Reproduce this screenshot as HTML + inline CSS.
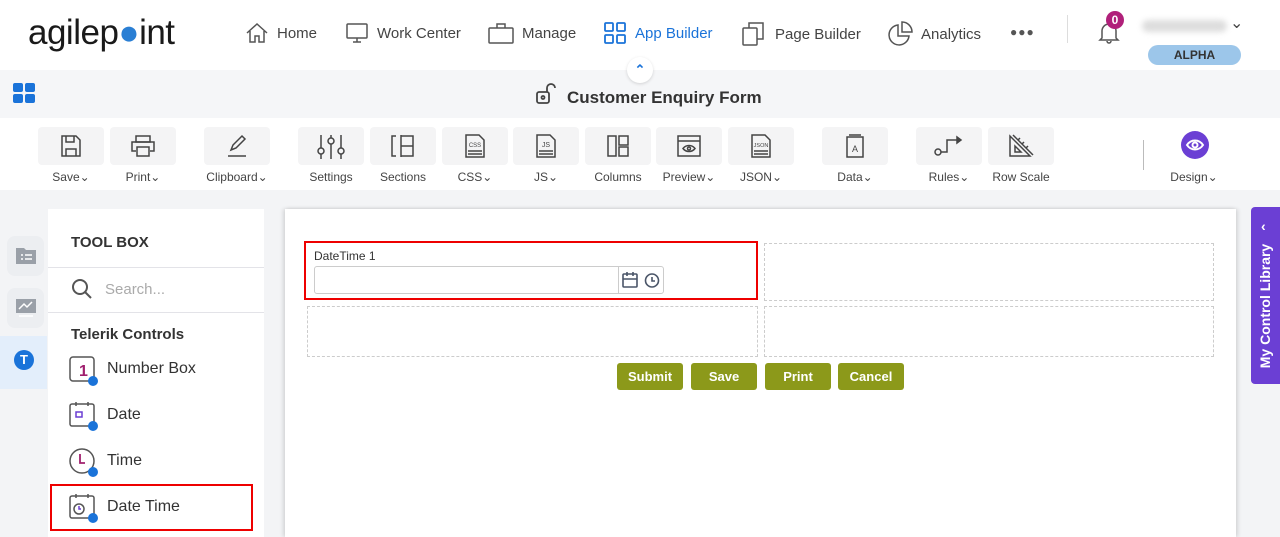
<!DOCTYPE html>
<html><head><meta charset="utf-8"><style>
*{box-sizing:border-box;margin:0;padding:0}
body{width:1280px;height:537px;overflow:hidden;font-family:"Liberation Sans",sans-serif;background:#f3f4f6;position:relative;color:#333}
.a{position:absolute}
.nav{font-size:15px;color:#444;top:21px;display:flex;align-items:center;gap:8px}
.tb{position:absolute;top:127px;width:66px;height:38px;background:#f4f4f5;border-radius:4px;display:flex;align-items:center;justify-content:center}
.tl{position:absolute;top:170px;font-size:12px;color:#444;text-align:center;width:80px}
.dash{position:absolute;border:1px dashed #ccc}
.btn{position:absolute;top:363px;height:27px;background:#8c991a;color:#fff;font-size:13px;font-weight:bold;border-radius:3px;display:flex;align-items:center;justify-content:center}
.ti{position:absolute;left:107px;font-size:16px;color:#333}
</style></head><body>
<!-- header -->
<div class="a" style="left:0;top:0;width:1280px;height:70px;background:#fff"></div>
<div class="a" style="left:28px;top:13px;font-size:35px;color:#1a1a1a;letter-spacing:-0.5px;font-family:'Liberation Sans',sans-serif">agilep<span style="color:#2a7fd4">●</span>int</div>
<div class="a nav" style="left:245px"><svg width="24" height="24" viewBox="0 0 24 24" fill="none" stroke="#555" stroke-width="1.5"><path d="M2 12L12 3l10 9M5 10v11h5v-6h4v6h5V10"/></svg>Home</div>
<div class="a nav" style="left:345px"><svg width="24" height="24" viewBox="0 0 24 24" fill="none" stroke="#555" stroke-width="1.5"><rect x="2" y="3" width="20" height="14" rx="1"/><path d="M12 17v4M8 21h8"/></svg>Work Center</div>
<div class="a nav" style="left:488px"><svg width="26" height="24" viewBox="0 0 26 24" fill="none" stroke="#555" stroke-width="1.5"><rect x="1" y="7" width="24" height="15" rx="1"/><path d="M9 7V3h8v4"/></svg>Manage</div>
<div class="a nav" style="left:603px;color:#1a73d9"><svg width="24" height="24" viewBox="0 0 24 24" fill="none" stroke="#1a73d9" stroke-width="1.8"><rect x="2" y="2" width="8" height="8" rx="1"/><rect x="14" y="2" width="8" height="8" rx="1"/><rect x="2" y="14" width="8" height="8" rx="1"/><rect x="14" y="14" width="8" height="8" rx="1"/></svg>App Builder</div>
<div class="a nav" style="left:741px"><svg width="26" height="26" viewBox="0 0 26 26" fill="none" stroke="#555" stroke-width="1.5"><rect x="2" y="7" width="14" height="17" rx="1"/><path d="M8 7V2h14v16h-6"/></svg>Page Builder</div>
<div class="a nav" style="left:887px"><svg width="26" height="26" viewBox="0 0 26 26" fill="none" stroke="#555" stroke-width="1.5"><path d="M11 4a10 10 0 1 0 11 11H11z"/><path d="M15 1v10h10A10 10 0 0 0 15 1z"/></svg>Analytics</div>
<div class="a" style="left:1010px;top:25px;font-size:12px;color:#555;letter-spacing:1px">●●●</div>
<div class="a" style="left:1067px;top:15px;width:1px;height:28px;background:#ddd"></div>
<svg class="a" style="left:1097px;top:20px" width="24" height="24" viewBox="0 0 24 24" fill="none" stroke="#555" stroke-width="1.5"><path d="M5 18V11a7 7 0 0 1 14 0v7l2 2H3zM10 21a2 2 0 0 0 4 0"/></svg>
<div class="a" style="left:1106px;top:11px;width:18px;height:18px;border-radius:50%;background:#b0207a;color:#fff;font-size:12px;font-weight:bold;text-align:center;line-height:18px">0</div>
<div class="a" style="left:1142px;top:20px;width:85px;height:12px;background:#ddd;border-radius:6px;filter:blur(3px)"></div>
<div class="a" style="left:1230px;top:13px;font-size:16px;color:#444">&#8964;</div>
<div class="a" style="left:1148px;top:45px;width:93px;height:20px;background:#9cc6ea;border-radius:10px;font-size:12px;font-weight:bold;color:#333;text-align:center;line-height:20px">ALPHA</div>
<!-- subheader -->
<div class="a" style="left:0;top:70px;width:1280px;height:48px;background:#f5f6f8"></div>
<div class="a" style="left:627px;top:57px;width:26px;height:26px;border-radius:50%;background:#fff;box-shadow:0 1px 3px rgba(0,0,0,.15);text-align:center;color:#1a73d9;font-size:13px;line-height:26px;font-weight:bold">&#8963;</div>
<svg class="a" style="left:13px;top:83px" width="24" height="22" viewBox="0 0 24 22"><g fill="#1a73d9"><rect x="0" y="0" width="10" height="9" rx="2"/><rect x="12" y="0" width="10" height="9" rx="2"/><rect x="0" y="11" width="10" height="9" rx="2"/><rect x="12" y="11" width="10" height="9" rx="2"/></g></svg>
<svg class="a" style="left:535px;top:83px" width="26" height="22" viewBox="0 0 26 22" fill="none" stroke="#444" stroke-width="1.8"><rect x="2" y="9" width="12" height="11" rx="2"/><circle cx="8" cy="14.5" r="1.5"/><path d="M12 9V5a4 4 0 0 1 8 0"/></svg>
<div class="a" style="left:567px;top:88px;font-size:17px;font-weight:bold;color:#333">Customer Enquiry Form</div>
<!-- toolbar -->
<div class="a" style="left:0;top:118px;width:1280px;height:72px;background:#fff"></div>
<div class="tb" style="left:38px"><svg width="22" height="24" viewBox="0 0 22 24" fill="none" stroke="#444" stroke-width="1.5"><path d="M2 2h14l4 4v16H2z"/><path d="M6 2v6h8V2M6 22v-7h10v7"/></svg></div><div class="tl" style="left:31px">Save&#8964;</div>
<div class="tb" style="left:110px"><svg width="28" height="24" viewBox="0 0 28 24" fill="none" stroke="#444" stroke-width="1.5"><rect x="7" y="2" width="14" height="6"/><path d="M7 17H3V8h22v9h-4"/><rect x="8" y="13" width="12" height="9"/></svg></div><div class="tl" style="left:103px">Print&#8964;</div>
<div class="tb" style="left:204px"><svg width="24" height="24" viewBox="0 0 24 24" fill="none" stroke="#444" stroke-width="1.5"><path d="M6 16l2-5 9-9 3 3-9 9zM3 22h18"/></svg></div><div class="tl" style="left:197px">Clipboard&#8964;</div>
<div class="tb" style="left:298px"><svg width="30" height="26" viewBox="0 0 30 26" fill="none" stroke="#444" stroke-width="1.5"><path d="M5 2v24M15 2v24M25 2v24"/><circle cx="5" cy="18" r="3" fill="#f4f4f5"/><circle cx="15" cy="8" r="3" fill="#f4f4f5"/><circle cx="25" cy="18" r="3" fill="#f4f4f5"/></svg></div><div class="tl" style="left:291px">Settings</div>
<div class="tb" style="left:370px"><svg width="28" height="24" viewBox="0 0 28 24" fill="none" stroke="#444" stroke-width="1.5"><path d="M7 2H3v20h4M12 1v22M12 2h12v20H12M12 12h12"/></svg></div><div class="tl" style="left:363px">Sections</div>
<div class="tb" style="left:442px"><svg width="22" height="26" viewBox="0 0 22 26" fill="none" stroke="#444" stroke-width="1.5"><path d="M2 2h13l5 5v17H2zM4 18h14M4 21h14"/><text x="11" y="14" font-size="6" text-anchor="middle" fill="#444" stroke="none" font-family="Liberation Sans">CSS</text></svg></div><div class="tl" style="left:435px">CSS&#8964;</div>
<div class="tb" style="left:513px"><svg width="22" height="26" viewBox="0 0 22 26" fill="none" stroke="#444" stroke-width="1.5"><path d="M2 2h13l5 5v17H2zM4 18h14M4 21h14"/><text x="11" y="14" font-size="7" text-anchor="middle" fill="#444" stroke="none" font-family="Liberation Sans">JS</text></svg></div><div class="tl" style="left:506px">JS&#8964;</div>
<div class="tb" style="left:585px"><svg width="24" height="24" viewBox="0 0 24 24" fill="none" stroke="#444" stroke-width="1.5"><rect x="2" y="2" width="8" height="20"/><rect x="13" y="2" width="9" height="9"/><rect x="13" y="13" width="9" height="9"/></svg></div><div class="tl" style="left:578px">Columns</div>
<div class="tb" style="left:656px"><svg width="26" height="24" viewBox="0 0 26 24" fill="none" stroke="#444" stroke-width="1.5"><rect x="2" y="2" width="22" height="20"/><path d="M2 7h22M7 14.5c3-4 9-4 12 0c-3 4-9 4-12 0z"/><circle cx="13" cy="14.5" r="1.5"/></svg></div><div class="tl" style="left:649px">Preview&#8964;</div>
<div class="tb" style="left:728px"><svg width="22" height="26" viewBox="0 0 22 26" fill="none" stroke="#444" stroke-width="1.5"><path d="M2 2h13l5 5v17H2zM4 18h14M4 21h14"/><text x="11" y="14" font-size="5.5" text-anchor="middle" fill="#444" stroke="none" font-family="Liberation Sans">JSON</text></svg></div><div class="tl" style="left:721px">JSON&#8964;</div>
<div class="tb" style="left:822px"><svg width="20" height="26" viewBox="0 0 20 26" fill="none" stroke="#444" stroke-width="1.5"><path d="M2 4h16v20H2zM4 2h12"/><text x="10" y="19" font-size="9" text-anchor="middle" fill="#444" stroke="none" font-family="Liberation Sans">A</text></svg></div><div class="tl" style="left:815px">Data&#8964;</div>
<div class="tb" style="left:916px"><svg width="32" height="24" viewBox="0 0 32 24" fill="none" stroke="#444" stroke-width="1.5"><circle cx="5" cy="18" r="3"/><path d="M8 18h6V6h10"/><path d="M24 3l4 3-4 3z" fill="#444"/></svg></div><div class="tl" style="left:909px">Rules&#8964;</div>
<div class="tb" style="left:988px"><svg width="28" height="26" viewBox="0 0 28 26" fill="none" stroke="#444" stroke-width="1.5"><path d="M3 3v20h20zM8 13v6h6z"/><path d="M6 2l20 20M11 7l2-2M15 11l2-2M19 15l2-2"/></svg></div><div class="tl" style="left:981px">Row Scale</div>
<div class="a" style="left:1143px;top:140px;width:1px;height:30px;background:#bbb"></div>
<div class="a" style="left:1181px;top:131px;width:28px;height:28px;border-radius:50%;background:#6b3fd4"><svg width="28" height="28" viewBox="0 0 28 28" fill="none" stroke="#fff" stroke-width="2"><path d="M6 14c4-6 12-6 16 0c-4 6-12 6-16 0z"/><circle cx="14" cy="14" r="2.5"/></svg></div>
<div class="tl" style="left:1154px">Design&#8964;</div>
<!-- left rail -->
<div class="a" style="left:7px;top:236px;width:37px;height:40px;background:#eceef1;border-radius:8px"><svg style="margin:8px" width="22" height="22" viewBox="0 0 22 22"><path d="M1 4h8l2 2h10v14H1z" fill="#9aa0a8"/><path d="M6 11h2M10 11h7M6 15h2M10 15h7" stroke="#fff" stroke-width="1.5"/></svg></div>
<div class="a" style="left:7px;top:288px;width:37px;height:40px;background:#eceef1;border-radius:8px"><svg style="margin:8px" width="22" height="22" viewBox="0 0 22 22"><rect x="1" y="3" width="20" height="14" fill="#9aa0a8"/><path d="M4 13l5-5 3 3 5-5M4 20h14" stroke="#fff" stroke-width="1.5" fill="none"/></svg></div>
<div class="a" style="left:0;top:336px;width:47px;height:53px;background:#e3eefb"></div>
<div class="a" style="left:14px;top:350px;width:20px;height:20px;border-radius:50%;background:#1a73d9;color:#fff;font-size:13px;font-weight:bold;text-align:center;line-height:20px">T</div>
<!-- toolbox -->
<div class="a" style="left:48px;top:209px;width:216px;height:328px;background:#fff"></div>
<div class="a" style="left:71px;top:234px;font-size:15px;font-weight:bold;color:#333">TOOL BOX</div>
<div class="a" style="left:48px;top:267px;width:216px;height:1px;background:#e3e3e8"></div>
<svg class="a" style="left:71px;top:278px" width="22" height="22" viewBox="0 0 22 22" fill="none" stroke="#555" stroke-width="2"><circle cx="9" cy="9" r="7"/><path d="M14 14l6 6"/></svg>
<div class="a" style="left:105px;top:281px;font-size:15px;color:#aaa">Search...</div>
<div class="a" style="left:48px;top:312px;width:216px;height:1px;background:#e3e3e8"></div>
<div class="a" style="left:71px;top:326px;font-size:15px;font-weight:bold;color:#333">Telerik Controls</div>
<svg class="a" style="left:68px;top:356px" width="30" height="30" viewBox="0 0 30 30"><rect x="2" y="1" width="24" height="24" rx="3" fill="none" stroke="#555" stroke-width="1.5"/><text x="11" y="20" font-size="16" font-weight="bold" fill="#a0206e" font-family="Liberation Sans">1</text><circle cx="25" cy="25" r="5" fill="#1a73d9"/></svg>
<div class="ti" style="top:360px">Number Box</div>
<svg class="a" style="left:68px;top:401px" width="30" height="30" viewBox="0 0 30 30" fill="none"><rect x="2" y="3" width="24" height="22" rx="2" stroke="#555" stroke-width="1.5"/><path d="M8 1v4M20 1v4" stroke="#555" stroke-width="1.5"/><rect x="8" y="11" width="6" height="5" stroke="#6b3fd4" stroke-width="1.5"/><circle cx="25" cy="25" r="5" fill="#1a73d9"/></svg>
<div class="ti" style="top:406px">Date</div>
<svg class="a" style="left:68px;top:447px" width="30" height="30" viewBox="0 0 30 30" fill="none"><circle cx="14" cy="14" r="12" stroke="#555" stroke-width="1.5"/><path d="M12 7v9h5" stroke="#a0206e" stroke-width="1.8"/><circle cx="25" cy="25" r="5" fill="#1a73d9"/></svg>
<div class="ti" style="top:452px">Time</div>
<svg class="a" style="left:68px;top:493px" width="30" height="30" viewBox="0 0 30 30" fill="none"><rect x="2" y="3" width="24" height="22" rx="2" stroke="#555" stroke-width="1.5"/><path d="M8 1v4M20 1v4" stroke="#555" stroke-width="1.5"/><circle cx="11" cy="16" r="5" stroke="#555" stroke-width="1.5"/><path d="M11 13v3h2" stroke="#6b3fd4" stroke-width="1.5"/><circle cx="25" cy="25" r="5" fill="#1a73d9"/></svg>
<div class="ti" style="top:498px">Date Time</div>
<div class="a" style="left:50px;top:484px;width:203px;height:47px;border:2px solid #e00"></div>
<!-- canvas -->
<div class="a" style="left:285px;top:209px;width:951px;height:328px;background:#fff;box-shadow:-2px 0 4px rgba(0,0,0,.12),2px 0 4px rgba(0,0,0,.12)"></div>
<div class="a" style="left:304px;top:241px;width:454px;height:59px;border:2px solid #e00"></div>
<div class="a" style="left:314px;top:249px;font-size:12px;color:#333">DateTime 1</div>
<div class="a" style="left:314px;top:266px;width:350px;height:28px;border:1px solid #ccc;border-radius:3px;background:#fff"></div>
<div class="a" style="left:618px;top:267px;width:1px;height:26px;background:#ccc"></div>
<svg class="a" style="left:622px;top:271px" width="40" height="18" viewBox="0 0 40 18" fill="none" stroke="#4a5568" stroke-width="1.6"><rect x="1" y="3" width="14" height="13" rx="1"/><path d="M1 8h14M5 1v4M11 1v4"/><circle cx="30" cy="9.5" r="6.5"/><path d="M30 6v4h3"/></svg>
<div class="dash" style="left:764px;top:243px;width:450px;height:58px"></div>
<div class="dash" style="left:307px;top:306px;width:451px;height:51px"></div>
<div class="dash" style="left:764px;top:306px;width:450px;height:51px"></div>
<div class="btn" style="left:617px;width:66px">Submit</div>
<div class="btn" style="left:691px;width:66px">Save</div>
<div class="btn" style="left:765px;width:66px">Print</div>
<div class="btn" style="left:838px;width:66px">Cancel</div>
<!-- right tab -->
<div class="a" style="left:1251px;top:207px;width:29px;height:177px;background:#6b3fd4;border-radius:4px 0 0 4px"></div>
<div class="a" style="left:1261px;top:218px;color:#fff;font-size:14px;font-weight:bold">&lsaquo;</div>
<div class="a" style="left:1170px;top:297px;width:190px;height:18px;transform:rotate(-90deg);color:#fff;font-size:14px;font-weight:bold;text-align:center;line-height:18px">My Control Library</div>
</body></html>
